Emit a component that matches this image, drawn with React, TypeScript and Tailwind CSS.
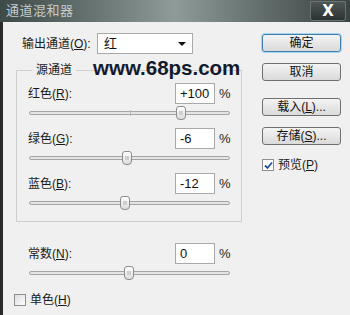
import React from "react";

const font = { fontFamily: '"Liberation Sans", "Noto Sans CJK SC", sans-serif' };

const Slider = ({ thumb, tick }: { thumb: string; tick?: boolean }) => (
  <div className="h-[18px] flex items-center">
    <div className="relative ml-[1px] w-[201px] h-[4px] rounded-full border border-[#a4a4a4] bg-[#e4e4e4]">
      {tick && <div className="absolute left-[100px] top-[-2px] w-px h-[6px] bg-[#b8b8b8]" />}
      <div
        className={`absolute top-[-6px] ${thumb} w-[10px] h-[14px] rounded-t-[3px] rounded-b-[4px] border border-[#8c8c8c] bg-gradient-to-b from-white to-[#dcdcdc] flex items-center justify-center`}
      >
        <div className="w-[4px] h-[4px] bg-[#cfcfcf]" />
      </div>
    </div>
  </div>
);

const ValueRow = ({ label, hot, value }: { label: string; hot: string; value: string }) => (
  <div className="flex items-center h-[21px]">
    <span className="w-[147px] text-[12px] text-[#1a1a1a]">
      {label}(<u>{hot}</u>):
    </span>
    <div className="w-[40px] h-[21px] bg-white border border-[#a9a9a9] flex items-center pl-[4px] text-[13px] text-[#111]">
      {value}
    </div>
    <span className="ml-[4px] text-[13px] text-[#222]">%</span>
  </div>
);

const Btn = ({ children, primary }: { children: React.ReactNode; primary?: boolean }) => (
  <div
    className={`w-[79px] h-[18px] rounded-[3px] border flex items-center justify-center text-[12px] text-[#111] bg-gradient-to-b from-[#f4f4f4] to-[#dadada] ${
      primary ? "border-[#3c7fb1] shadow-[0_0_0_1px_#a8d4ee]" : "border-[#707070]"
    }`}
  >
    {children}
  </div>
);

export default function App() {
  return (
    <div className="relative w-[350px] h-[315px] overflow-hidden bg-[#f0f0f0]" style={font}>
      {/* title bar */}
      <div className="h-[22px] flex items-center justify-between bg-gradient-to-r from-[#3e4a48] via-[#8f9b99] to-[#3a4442]">
        <span className="ml-[6px] text-[13px] text-[#c4cccc] tracking-[0.5px]">通道混和器</span>
        <div className="mr-[4px] w-[36px] h-[20px] bg-gradient-to-b from-[#4d5756] to-[#2c3332] border border-[#6a7371] rounded-b-[3px] flex items-center justify-center">
          <span className="text-white font-bold text-[15px] leading-none" style={{ fontFamily: '"DejaVu Sans", sans-serif' }}>
            X
          </span>
        </div>
      </div>

      <div className="flex h-[293px] border-l-[3px] border-[#2a2a2a]">
        {/* left column */}
        <div className="w-[250px] pt-[11px]">
          <div className="flex items-center h-[21px] pl-[19px]">
            <span className="w-[75px] text-[12px] text-[#1a1a1a]">
              输出通道(<u>O</u>):
            </span>
            <div className="w-[96px] h-[21px] bg-white border border-[#a9a9a9] flex items-center justify-between pl-[6px] pr-[6px]">
              <span className="text-[13px] text-[#111]">红</span>
              <span className="w-0 h-0 border-l-[4px] border-r-[4px] border-t-[4px] border-l-transparent border-r-transparent border-t-[#111]" />
            </div>
          </div>

          <fieldset className="mt-[8px] ml-[13px] w-[226px] h-[160px] border border-[#cfcfcf] pl-[11px]">
            <legend className="ml-[4px] px-[4px] h-[16px] leading-[16px] text-[12px] text-[#1a1a1a]">源通道</legend>
            <div className="pt-[5px] flex flex-col gap-[6px]">
              <div>
                <ValueRow label="红色" hot="R" value="+100" />
                <Slider thumb="left-[146px]" tick />
              </div>
              <div>
                <ValueRow label="绿色" hot="G" value="-6" />
                <Slider thumb="left-[92px]" />
              </div>
              <div>
                <ValueRow label="蓝色" hot="B" value="-12" />
                <Slider thumb="left-[90px]" />
              </div>
            </div>
          </fieldset>

          <div className="mt-[21px] pl-[25px]">
            <ValueRow label="常数" hot="N" value="0" />
            <Slider thumb="left-[94px]" />
          </div>

          <div className="mt-[9px] pl-[11px] flex items-center gap-[4px]">
            <div className="w-[12px] h-[12px] border border-[#8e8f8f] bg-gradient-to-br from-[#dcdcdc] to-white" />
            <span className="text-[12px] text-[#1a1a1a]">
              单色(<u>H</u>)
            </span>
          </div>
        </div>

        {/* right column */}
        <div className="pl-[9px] pt-[12px] flex flex-col">
          <Btn primary>确定</Btn>
          <div className="mt-[11px]">
            <Btn>取消</Btn>
          </div>
          <div className="mt-[17px]">
            <Btn>
              载入(<u>L</u>)...
            </Btn>
          </div>
          <div className="mt-[11px]">
            <Btn>
              存储(<u>S</u>)...
            </Btn>
          </div>
          <div className="mt-[11px] flex items-center gap-[4px]">
            <div className="w-[12px] h-[12px] border border-[#8e8f8f] bg-white flex items-center justify-center">
              <svg width="9" height="9" viewBox="0 0 9 9">
                <path d="M1 4.5 L3.5 7 L8 1.5" stroke="#2150a0" strokeWidth="1.8" fill="none" />
              </svg>
            </div>
            <span className="text-[12px] text-[#1a1a1a]">
              预览(<u>P</u>)
            </span>
          </div>
        </div>
      </div>

      {/* watermark */}
      <div
        className="absolute left-[93px] top-[56px] text-[20.5px] leading-[24px] font-bold text-[#121a2e]"
        style={{ fontFamily: '"Liberation Sans", Arial, sans-serif' }}
      >
        www.68ps.com
      </div>
    </div>
  );
}
